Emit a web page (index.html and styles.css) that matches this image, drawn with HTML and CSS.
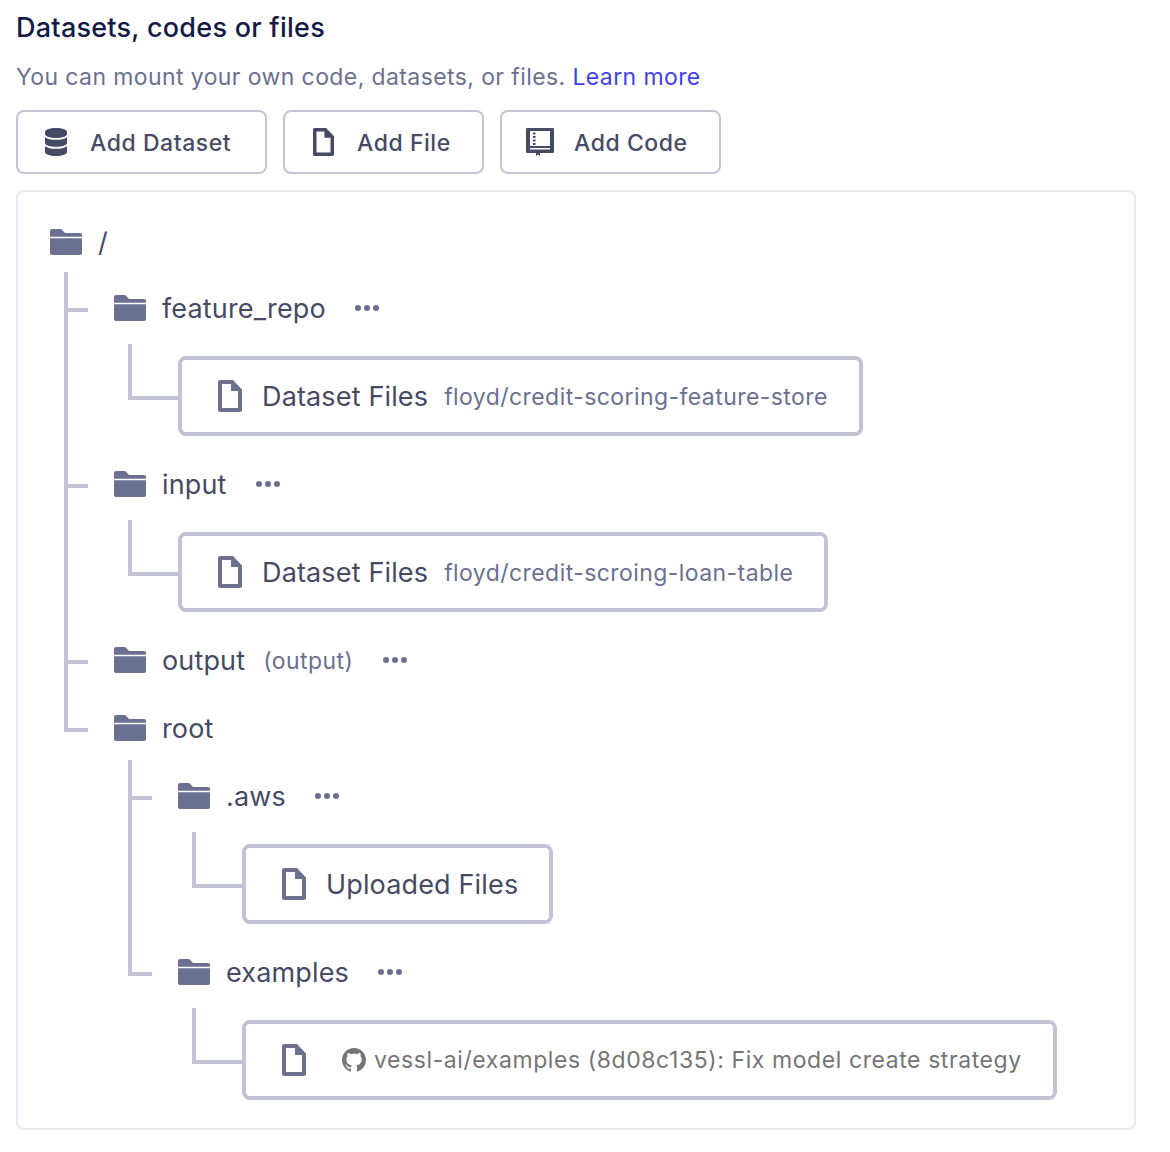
FILE: index.html
```html
<!DOCTYPE html>
<html lang="en">
<head>
    <meta charset="UTF-8">
    <meta name="viewport" content="width=device-width, initial-scale=1.0">
    <title>Datasets, codes or files</title>
    <link rel="stylesheet" href="styles.css">
</head>
<body>
    <svg class="icon-defs" aria-hidden="true">
        <symbol id="i-folder" viewBox="0 0 32 26">
            <path d="M2 0h8.500a2 2 0 0 1 1.500.7L15 4h15a2 2 0 0 1 2 2v1.800H0V2a2 2 0 0 1 2-2z"/>
            <path d="M0 9.300h32V24a2 2 0 0 1-2 2H2a2 2 0 0 1-2-2z"/>
        </symbol>
        <symbol id="i-file" viewBox="0 0 24 32">
            <path fill-rule="evenodd" d="M2 0h13l9 9.500V30a2 2 0 0 1-2 2H2a2 2 0 0 1-2-2V2a2 2 0 0 1 2-2zM4 4v24h16V11h-7V4z"/>
        </symbol>
        <symbol id="i-database" viewBox="0 0 22 28">
            <path d="M11 0c6 0 11 1.600 11 4v2c0 2.400-5 4-11 4S0 8.400 0 6V4c0-2.400 5-4 11-4z"/>
            <path d="M0 9c2 2 6.500 2.800 11 2.800S20 11 22 9v6c0 2.400-5 3.800-11 3.800S0 17.400 0 15z"/>
            <path d="M0 18c2 2 6.500 2.800 11 2.800S20 20 22 18v6c0 2.400-5 4-11 4S0 26.400 0 24z"/>
        </symbol>
        <symbol id="i-book" viewBox="0 0 28 28">
            <path fill-rule="evenodd" d="M1 0h26a1 1 0 0 1 1 1v23a1 1 0 0 1-1 1H14v3l-2-1.500-2 1.500v-3H1a1 1 0 0 1-1-1V1a1 1 0 0 1 1-1zM4 3v15h20V3zM7 4.500h2.500v2H7zm0 3.500h2.500v2H7zm0 3.500h2.500v2H7zm0 3.500h2.500v2H7zM4 20v1.500h20V20z"/>
        </symbol>
        <symbol id="i-github" viewBox="0 0 16 16">
            <path d="M8 0C3.580 0 0 3.580 0 8c0 3.540 2.290 6.530 5.470 7.590.4.070.55-.17.55-.38 0-.19-.01-.82-.01-1.490-2.010.37-2.530-.49-2.690-.94-.09-.23-.48-.94-.82-1.130-.28-.15-.68-.52-.01-.53.63-.01 1.080.58 1.230.82.72 1.210 1.870.87 2.330.66.070-.52.28-.87.51-1.070-1.780-.2-3.640-.89-3.640-3.950 0-.87.31-1.590.82-2.150-.08-.2-.36-1.020.08-2.120 0 0 .67-.21 2.200.82.64-.18 1.320-.27 2-.27.68 0 1.360.09 2 .27 1.530-1.040 2.200-.82 2.200-.82.44 1.100.16 1.920.08 2.120.51.56.82 1.270.82 2.150 0 3.070-1.870 3.750-3.650 3.950.29.25.54.73.54 1.480 0 1.070-.01 1.930-.01 2.200 0 .21.15.46.55.38A8.013 8.013 0 0 0 16 8c0-4.420-3.580-8-8-8z"/>
        </symbol>
    </svg>

    <h2 class="title">Datasets, codes or files</h2>
    <p class="desc">You can mount your own code, datasets, or files. <a href="#">Learn more</a></p>

    <div class="actions">
        <button class="btn btn-dataset"><span class="btn-icon"><svg width="22" height="28"><use href="#i-database"/></svg></span><span class="btn-label">Add Dataset</span></button>
        <button class="btn btn-file"><span class="btn-icon"><svg width="21" height="28"><use href="#i-file"/></svg></span><span class="btn-label">Add File</span></button>
        <button class="btn btn-code"><span class="btn-icon"><svg width="28" height="28"><use href="#i-book"/></svg></span><span class="btn-label">Add Code</span></button>
    </div>

    <div class="panel">
        <div class="node">
            <div class="row"><svg class="folder"><use href="#i-folder"/></svg><span class="name">/</span></div>
            <ul class="children top">
                <li class="node">
                    <div class="row">
                        <svg class="folder"><use href="#i-folder"/></svg><span class="name">feature_repo</span>
                        <span class="dots"><i></i><i></i><i></i></span>
                    </div>
                    <ul class="children leaf">
                        <li class="node">
                            <div class="file">
                                <svg class="file-icon"><use href="#i-file"/></svg>
                                <span class="name">Dataset Files</span>
                                <span class="sub">floyd/credit-scoring-feature-store</span>
                            </div>
                        </li>
                    </ul>
                </li>
                <li class="node">
                    <div class="row">
                        <svg class="folder"><use href="#i-folder"/></svg><span class="name">input</span>
                        <span class="dots"><i></i><i></i><i></i></span>
                    </div>
                    <ul class="children leaf">
                        <li class="node">
                            <div class="file">
                                <svg class="file-icon"><use href="#i-file"/></svg>
                                <span class="name">Dataset Files</span>
                                <span class="sub">floyd/credit-scroing-loan-table</span>
                            </div>
                        </li>
                    </ul>
                </li>
                <li class="node">
                    <div class="row">
                        <svg class="folder"><use href="#i-folder"/></svg><span class="name">output</span>
                        <span class="sub">(output)</span>
                        <span class="dots"><i></i><i></i><i></i></span>
                    </div>
                </li>
                <li class="node">
                    <div class="row"><svg class="folder"><use href="#i-folder"/></svg><span class="name">root</span></div>
                    <ul class="children">
                        <li class="node">
                            <div class="row">
                                <svg class="folder"><use href="#i-folder"/></svg><span class="name">.aws</span>
                                <span class="dots"><i></i><i></i><i></i></span>
                            </div>
                            <ul class="children leaf">
                                <li class="node">
                                    <div class="file">
                                        <svg class="file-icon"><use href="#i-file"/></svg>
                                        <span class="name">Uploaded Files</span>
                                    </div>
                                </li>
                            </ul>
                        </li>
                        <li class="node">
                            <div class="row">
                                <svg class="folder"><use href="#i-folder"/></svg><span class="name">examples</span>
                                <span class="dots"><i></i><i></i><i></i></span>
                            </div>
                            <ul class="children leaf">
                                <li class="node">
                                    <div class="file">
                                        <svg class="file-icon"><use href="#i-file"/></svg>
                                        <svg class="gh-icon"><use href="#i-github"/></svg>
                                        <span class="commit">vessl-ai/examples (8d08c135): Fix model create strategy</span>
                                    </div>
                                </li>
                            </ul>
                        </li>
                    </ul>
                </li>
            </ul>
        </div>
    </div>
</body>
</html>
```

FILE: styles.css
```css
body {
    margin: 0;
    padding: 8px 34px 0 16px;
    font-family: Inter, 'Noto Sans', sans-serif;
    background-color: #ffffff;
    color: #464a65;
}

.icon-defs {
    display: none;
}

.title {
    margin: 0;
    font-size: 27px;
    line-height: 40px;
    font-weight: 500;
    letter-spacing: 0.25px;
    color: #141a45;
}

.desc {
    margin: 12px 0 16px;
    font-size: 23px;
    line-height: 34px;
    letter-spacing: 0.4px;
    color: #6b7091;
}

.desc a {
    color: #3e40f0;
    text-decoration: none;
}

.actions {
    display: flex;
    gap: 16px;
}

.btn {
    display: flex;
    align-items: center;
    gap: 20px;
    height: 64px;
    padding: 0 0 0 24px;
    background: #ffffff;
    border: 2px solid #c2c4d6;
    border-radius: 8px;
    font-family: inherit;
    font-size: 23px;
    font-weight: 500;
    letter-spacing: 0.55px;
    color: #464a65;
    fill: #464a65;
}

.btn-dataset {
    width: 251px;
}

.btn-file {
    width: 201px;
}

.btn-code {
    width: 221px;
}

.btn-icon {
    display: flex;
    justify-content: center;
    width: 28px;
}

.btn-label {
    margin-top: 2px;
}

.panel {
    margin-top: 16px;
    padding: 32px 32px 30px;
    border: 2px solid #e8e9f0;
    border-radius: 8px;
}

/* tree */
.children {
    display: flex;
    flex-direction: column;
    gap: 32px;
    list-style: none;
    margin: 32px 0 0 14px;
    padding: 0 0 0 50px;
}

.children.top {
    margin-top: 30px;
}

.children.leaf {
    margin: 30px 0 -2px 14px;
}

.children > .node {
    position: relative;
}

/* connector lines */
.children > .node::before {
    content: "";
    position: absolute;
    left: -50px;
    top: -32px;
    bottom: 0;
    width: 4px;
    background-color: #c2c4d6;
}

.children > .node:first-child::before {
    top: -18px;
}

.children > .node:last-child::before {
    bottom: auto;
    height: 54px;
}

.children > .node::after {
    content: "";
    position: absolute;
    left: -46px;
    top: 18px;
    width: 20px;
    height: 4px;
    background-color: #c2c4d6;
}

.children.leaf > .node::before {
    top: -12px;
    bottom: auto;
    height: 56px;
}

.children.leaf > .node::after {
    top: 40px;
    width: 46px;
}

.row {
    display: flex;
    align-items: center;
    height: 36px;
}

.folder {
    flex: none;
    width: 32px;
    height: 26px;
    margin-right: 16px;
    fill: #6b7091;
}

.name {
    font-size: 27px;
    letter-spacing: 0.15px;
    color: #464a65;
}

.sub {
    margin-top: 2px;
    font-size: 23px;
    letter-spacing: 0.43px;
    color: #6b7091;
}

.row .sub {
    margin-left: 18px;
}

.dots {
    display: flex;
    gap: 3px;
    margin-left: 29px;
}

.sub + .dots {
    margin-left: 30px;
}

.dots i {
    width: 6px;
    height: 6px;
    border-radius: 50%;
    background-color: #6b7091;
}

.file {
    display: inline-flex;
    align-items: center;
    height: 80px;
    padding: 0 31px 0 36px;
    box-sizing: border-box;
    border: 4px solid #c2c4d6;
    border-radius: 8px;
    background-color: #ffffff;
    vertical-align: top;
}

.file-icon {
    flex: none;
    width: 24px;
    height: 32px;
    margin-right: 20px;
    fill: #6b7091;
}

.file .sub {
    margin-left: 16px;
}

.gh-icon {
    flex: none;
    width: 24px;
    height: 24px;
    margin: 0 8px 0 16px;
    fill: #757575;
}

.commit {
    font-size: 23px;
    letter-spacing: 0.58px;
    color: #757575;
}
```
